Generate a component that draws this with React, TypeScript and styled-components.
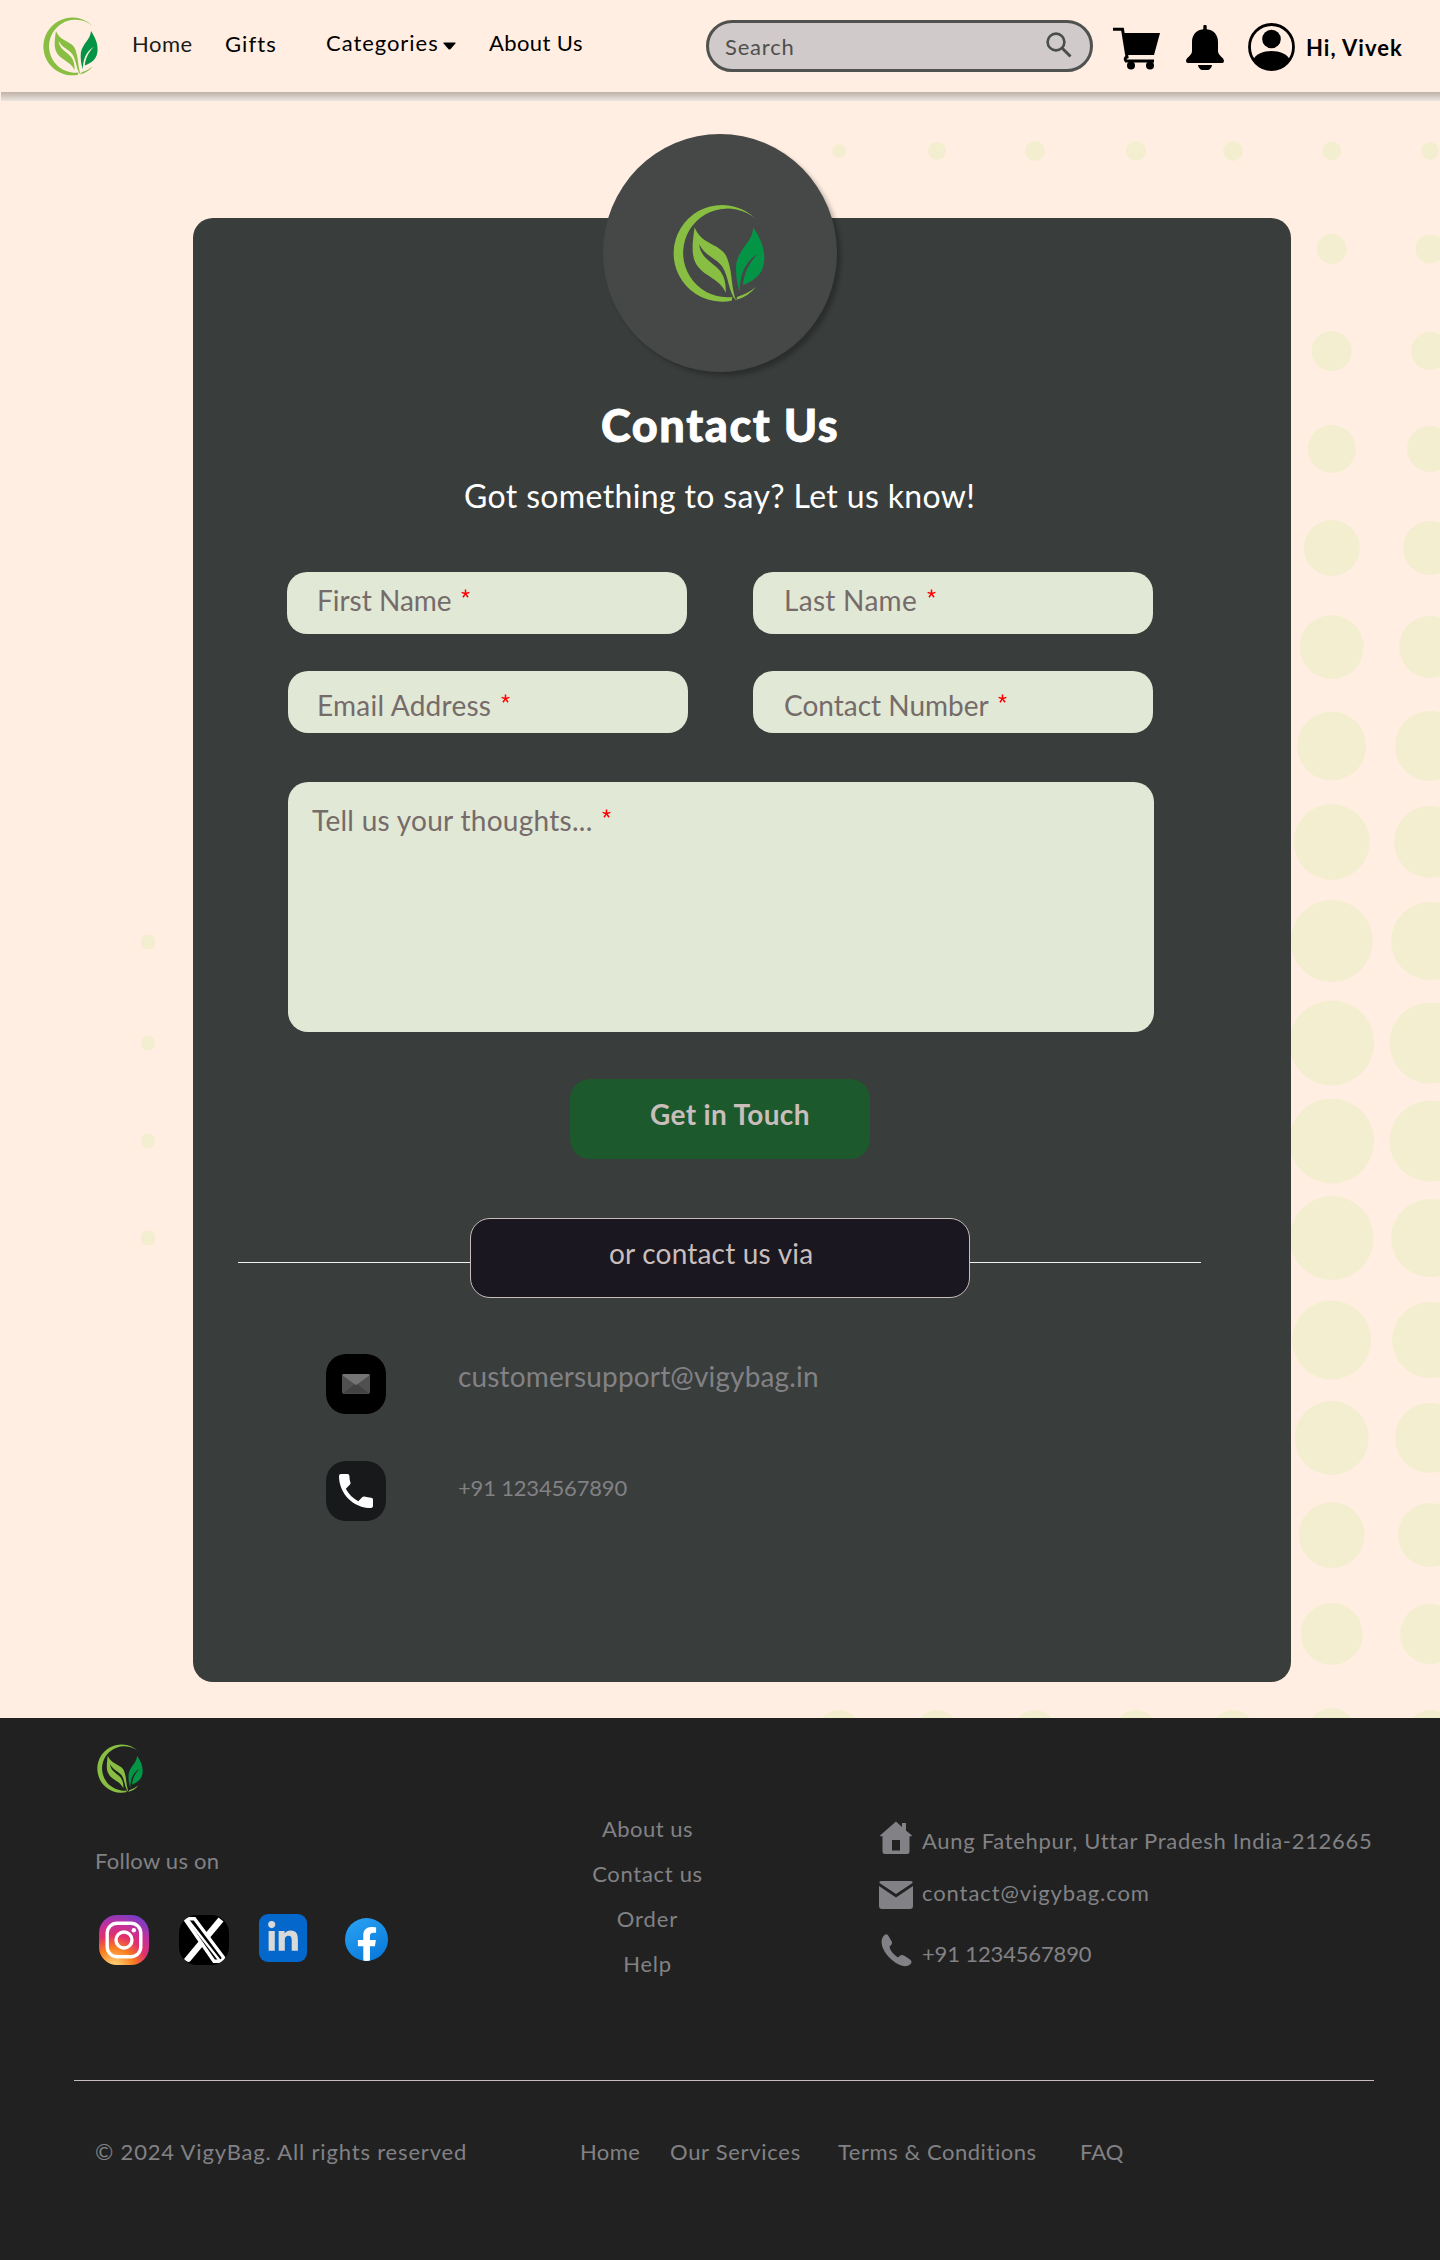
import React from "react";
import styled, { createGlobalStyle } from "styled-components";
import { FaFacebookF, FaLinkedinIn } from "react-icons/fa";

const Global = createGlobalStyle`
  * { box-sizing: border-box; }
  body { margin: 0; background: #ffeee1; font-family: Lato, "Liberation Sans", sans-serif; }
  svg { display: block; flex: none; }
`;

const Page = styled.div`width: 1440px; height: 2260px; display: flex; flex-direction: column; overflow: hidden;`;

const Label = styled.span<{ $size?: number; $ls?: number; $weight?: number; $color?: string; $w?: number; $x?: number; $top?: number }>`
  display: block;
  flex: none;
  white-space: nowrap;
  font-size: ${(p) => p.$size ?? 22}px;
  line-height: ${(p) => Math.round((p.$size ?? 22) * 1.2)}px;
  font-weight: ${(p) => p.$weight ?? 400};
  letter-spacing: ${(p) => p.$ls ?? 0}px;
  color: ${(p) => p.$color ?? "#000"};
  width: ${(p) => (p.$w ? `${p.$w}px` : "auto")};
  margin-left: ${(p) => p.$x ?? 0}px;
  margin-top: ${(p) => p.$top ?? 0}px;
`;

/* ---------- header ---------- */
const Header = styled.header`height: 92px; flex: none; display: flex; align-items: flex-start; padding-left: 43px;`;
const HeaderShadow = styled.div`height: 9px; flex: none; margin-left: 1px; background: linear-gradient(#bfb2a8, #eae4df);`;
const HeaderLogo = styled.div`width: 55px; margin-top: 17px;`;
const Caret = styled.svg`margin: 42px 0 0 4px;`;
const SearchBox = styled.div`
  width: 387px; height: 52px; margin: 20px 0 0 124px; flex: none;
  display: flex; align-items: flex-start; justify-content: space-between;
  padding: 9px 18px 0 16px; border: 3px solid #50524f; border-radius: 26px; background: #d0cbca;
`;
const HeaderIcon = styled.svg<{ $x: number; $top: number }>`margin: ${(p) => p.$top}px 0 0 ${(p) => p.$x}px;`;

/* ---------- main ---------- */
const Main = styled.main`position: relative; height: 1617px; flex: none; padding: 117px 0 0 193px; overflow: hidden;`;
const Dots = styled.svg`position: absolute; left: 0; top: 0;`;
const Card = styled.section`
  position: relative; width: 1098px; height: 1464px; border-radius: 20px; background: #393d3b;
  display: flex; flex-direction: column; align-items: flex-start;
`;
const Emblem = styled.div`
  width: 234px; height: 238px; margin: -84px 0 0 410px; flex: none; border-radius: 50%;
  background: #454847; box-shadow: 4px 4px 4px rgba(0, 0, 0, 0.25); padding: 70px 0 0 70px;
`;
const Title = styled.h1`
  margin: 26px 0 0 408px; font-size: 45px; line-height: 54px; font-weight: 900; letter-spacing: 1.6px;
  white-space: nowrap; color: #fff; -webkit-text-stroke: 0.8px #fff;
`;
const FieldRow = styled.div<{ $x: number; $gap: number; $top: number }>`
  display: flex; margin: ${(p) => p.$top}px 0 0 ${(p) => p.$x}px; gap: ${(p) => p.$gap}px;
`;
const Field = styled.div<{ $pt: number; $pl: number; $w?: number; $h?: number }>`
  width: ${(p) => p.$w ?? 400}px; height: ${(p) => p.$h ?? 62}px; flex: none;
  padding: ${(p) => p.$pt}px 0 0 ${(p) => p.$pl}px;
  display: flex; align-items: flex-start; border-radius: 20px; background: #e1e8d5;
`;
const Star = styled.svg`margin: 6px 0 0 9px;`;
const Submit = styled.button`
  width: 300px; height: 80px; margin: 47px 0 0 377px; padding: 18px 0 0 80px; flex: none;
  display: flex; align-items: flex-start; border: 0; border-radius: 20px; background: #1c592c; font-family: inherit;
`;
const Divider = styled.div`display: flex; align-items: flex-start; margin: 59px 0 0 45px;`;
const Rule = styled.div<{ $w: number }>`width: ${(p) => p.$w}px; height: 1px; margin-top: 44px; background: #f4f1f1;`;
const Pill = styled.div`
  width: 500px; height: 80px; padding: 17px 0 0 138px; border: 1px solid #c9bcbc; border-radius: 20px; background: #1a1720;
`;
const ContactRow = styled.div<{ $top: number }>`display: flex; align-items: flex-start; margin: ${(p) => p.$top}px 0 0 133px;`;
const Tile = styled.div<{ $bg: string }>`
  width: 60px; height: 60px; border-radius: 20px; background: ${(p) => p.$bg};
  display: flex; align-items: center; justify-content: center;
`;

/* ---------- footer ---------- */
const Footer = styled.footer`height: 542px; flex: none; background: #212121; display: flex; flex-direction: column;`;
const FooterTop = styled.div`display: flex; align-items: flex-start; height: 362px; flex: none; padding-left: 95px;`;
const Brand = styled.div`width: 480px; padding: 26px 0 0 0;`;
const FooterLogo = styled.div`margin-left: 2px;`;
const Socials = styled.div`display: flex; align-items: flex-start; margin: 40px 0 0 4px;`;
const Social = styled.div<{ $s: number; $x: number; $top: number; $r: number; $bg: string }>`
  width: ${(p) => p.$s}px; height: ${(p) => p.$s}px; margin: ${(p) => p.$top}px 0 0 ${(p) => p.$x}px;
  border-radius: ${(p) => p.$r}px; background: ${(p) => p.$bg}; color: #fff;
  display: flex; align-items: center; justify-content: center; overflow: hidden;
`;
const FacebookGlyph = styled(FaFacebookF)`margin: 9px 0 0 1px;`;
const Links = styled.nav`width: 145px; padding-top: 98px; display: flex; flex-direction: column; align-items: center; gap: 19px;`;
const Reach = styled.div`margin-left: 159px; padding-top: 103px; display: flex; flex-direction: column;`;
const ReachRow = styled.div<{ $h: number }>`display: flex; align-items: flex-start; height: ${(p) => p.$h}px;`;
const IconCell = styled.div`width: 43px; flex: none;`;
const FooterRule = styled.div`width: 1300px; height: 1px; margin-left: 74px; flex: none; background: #c9bcbc;`;
const FooterBottom = styled.div`display: flex; padding: 58px 0 0 95px;`;

const Logo = ({ w }: { w: number }) => (
  <svg width={w} height={(w * 294) / 276} viewBox="0 0 276 294">
    <g fill="#88be42">
      <path d="M249 45A145 145 0 1 0 176 290L178 279A133 133 0 1 1 249 45Z" />
      <path d="M190 287Q226 278 249 248Q226 268 193 278Z" />
      <path d="M65 70C56 125 58 150 64 168C80 216 138 218 158 266C160 235 152 207 130 189C100 165 80 150 79 121C95 156 130 162 148 188C168 218 165 262 190 291C178 262 177 225 172 197C168 178 164 162 156 150C132 118 84 120 65 70Z" />
    </g>
    <path fill="#039445" d="M241 70C238 115 200 130 190 178C187 210 192 240 200 263C200 215 215 172 255 149C225 180 212 212 210 244C252 226 274 205 274 160C274 125 258 98 241 70Z" />
  </svg>
);

const Required = () => (
  <Star width="9" height="9" viewBox="0 0 9 9">
    <path d="M4.5 .4V4.6M.6 3.4L4.5 4.6L8.4 3.4M2 8.2L4.5 4.6L7 8.2" stroke="#ff0000" strokeWidth="1.5" fill="none" />
  </Star>
);

const rows = [50, 148, 250, 348, 447, 546, 645, 741, 840, 942, 1040, 1137, 1239, 1337, 1434, 1533, 1631];
const radiiA = [9.5, 15, 20, 24, 28, 32, 34.5, 38, 41, 42.5, 42.5, 42, 39.5, 37, 33, 31, 24];
const radiiB = [9, 14.5, 19, 23, 27, 31, 35, 36, 39, 40.5, 40.5, 39, 38, 35, 32, 30, 22];
const topRow: [number, number][] = [[839, 7], [937, 9], [1035, 10], [1136, 10], [1233, 10]];
const footerLinks: [string, number][] = [["About us", 0.5], ["Contact us", 0.7], ["Order", 0.9], ["Help", 0.7]];

const grey = "#828185";
const ink = "#756b6a";

export default function App() {
  return (
    <Page>
      <Global />
      <Header>
        <HeaderLogo><Logo w={55} /></HeaderLogo>
        <Label $x={34} $w={93} $top={31} $ls={0.5} $color="#1c1c1a">Home</Label>
        <Label $w={101} $top={31} $ls={1.1}>Gifts</Label>
        <Label $w={113} $top={30} $ls={0.95}>Categories</Label>
        <Caret width="13" height="8" viewBox="0 0 13 8"><path d="M1 .5H12Q13 .5 12.4 1.6L7.4 7.2Q6.5 8 5.6 7.2L.6 1.6Q0 .5 1 .5Z" /></Caret>
        <Label $x={33} $w={93} $top={30} $ls={0.4}>About Us</Label>
        <SearchBox>
          <Label $color="#4f4f4d" $top={2} $ls={0.8}>Search</Label>
          <svg width="26" height="26" viewBox="0 0 26 26" fill="none" stroke="#4b4d4a" strokeWidth="2.6">
            <circle cx="10" cy="10" r="8.4" /><path d="M16 16L24.5 24.5" strokeWidth="3" />
          </svg>
        </SearchBox>
        <HeaderIcon $x={20} $top={27} width="47" height="43" viewBox="0 0 47 43">
          <path d="M11 6H47L41 28H14Z" /><path d="M0 2.2H9.5L14 30Q11 31 13 34H41" fill="none" stroke="#000" strokeWidth="3" />
          <circle cx="18" cy="38.5" r="4" /><circle cx="37" cy="38.5" r="4" />
        </HeaderIcon>
        <HeaderIcon $x={26} $top={25} width="38" height="45" viewBox="0 0 38 45">
          <path d="M17.3 1.5a1.7 1.7 0 0 1 3.4 0V4.2C28 5 32 10 32 17V26C32 31 38 32 38 36Q38 38 36 38H2Q0 38 0 36C0 32 6 31 6 26V17C6 10 10 5 17.3 4.2Z" />
          <path d="M12 40H26A7 5.5 0 0 1 12 40Z" />
        </HeaderIcon>
        <HeaderIcon $x={24} $top={23} width="47" height="48" viewBox="0 0 47 48">
          <ellipse cx="23.5" cy="24" rx="22" ry="22.5" fill="none" stroke="#000" strokeWidth="2.8" />
          <circle cx="23.5" cy="16" r="9.3" /><path d="M5 37C10 25 37 25 42 37C33 50 14 50 5 37Z" />
        </HeaderIcon>
        <Label $x={11} $top={35} $weight={700} $ls={1}>Hi, Vivek</Label>
      </Header>
      <HeaderShadow />

      <Main>
        <Dots width="1440" height="1617" viewBox="0 0 1440 1617" fill="#f4eed1">
          {rows.map((y, i) => <circle key={`a${y}`} cx="1331.7" cy={y} r={radiiA[i]} />)}
          {rows.map((y, i) => <circle key={`b${y}`} cx="1430" cy={y} r={radiiB[i]} />)}
          {topRow.map(([x, r]) => <circle key={`t${x}`} cx={x} cy="50" r={r} />)}
          {topRow.map(([x]) => <circle key={`u${x}`} cx={x} cy="1631" r="22" />)}
          {[841, 942, 1040, 1137].map((y) => <circle key={`l${y}`} cx="148" cy={y} r="7.5" />)}
        </Dots>
        <Card>
          <Emblem><Logo w={92} /></Emblem>
          <Title>Contact Us</Title>
          <Label $size={32} $ls={0.36} $color="#fff" $top={25} $x={271}>Got something to say? Let us know!</Label>
          <FieldRow $x={94} $gap={66} $top={57}>
            <Field $pt={11} $pl={30}><Label $size={28} $color={ink} $w={135}>First Name</Label><Required /></Field>
            <Field $pt={11} $pl={31}><Label $size={28} $ls={0.3} $color={ink} $w={134}>Last Name</Label><Required /></Field>
          </FieldRow>
          <FieldRow $x={95} $gap={65} $top={37}>
            <Field $pt={17} $pl={29}><Label $size={28} $ls={0.25} $color={ink} $w={175}>Email Address</Label><Required /></Field>
            <Field $pt={17} $pl={31}><Label $size={28} $color={ink} $w={205}>Contact Number</Label><Required /></Field>
          </FieldRow>
          <FieldRow $x={95} $gap={0} $top={49}>
            <Field $pt={21} $pl={24} $w={866} $h={250}><Label $size={28} $ls={0.28} $color={ink} $w={281}>Tell us your thoughts...</Label><Required /></Field>
          </FieldRow>
          <Submit><Label $size={28} $weight={700} $ls={0.35} $color="#c9bebc">Get in Touch</Label></Submit>
          <Divider>
            <Rule $w={232} />
            <Pill><Label $size={28} $ls={0.2} $color="#c9bebc">or contact us via</Label></Pill>
            <Rule $w={231} />
          </Divider>
          <ContactRow $top={56}>
            <Tile $bg="#000">
              <svg width="28" height="20" viewBox="0 0 28 20">
                <rect width="28" height="20" rx="2" fill="#505050" /><path d="M1 19.5L14 9L27 19.5Z" fill="#424242" /><path d="M0 1Q1 0 2 0H26Q27 0 28 1L15 10.5Q14 11 13 10.5Z" fill="#747474" />
              </svg>
            </Tile>
            <Label $size={28} $ls={0.15} $color={grey} $top={5} $x={72}>customersupport@vigybag.in</Label>
          </ContactRow>
          <ContactRow $top={47}>
            <Tile $bg="#18191b">
              <svg width="34" height="34" viewBox="3 3 18 18" fill="#fff">
                <path d="M6.62 10.79c1.44 2.83 3.76 5.14 6.59 6.59l2.2-2.2c.27-.27.67-.36 1.02-.24 1.12.37 2.33.57 3.57.57.55 0 1 .45 1 1V20c0 .55-.45 1-1 1-9.39 0-17-7.61-17-17 0-.55.45-1 1-1h3.5c.55 0 1 .45 1 1 0 1.25.2 2.45.57 3.57.11.35.03.74-.25 1.02l-2.2 2.2z" />
              </svg>
            </Tile>
            <Label $ls={-0.18} $color={grey} $top={14} $x={72}>+91 1234567890</Label>
          </ContactRow>
        </Card>
      </Main>

      <Footer>
        <FooterTop>
          <Brand>
            <FooterLogo><Logo w={46} /></FooterLogo>
            <Label $ls={0.25} $color={grey} $top={55}>Follow us on</Label>
            <Socials>
              <Social $s={50} $x={0} $top={1} $r={18} $bg="radial-gradient(circle at 30% 107%, #ffdd7a 0%, #fdc468 10%, #fa7e1e 32%, #e1306c 52%, #c62f9a 68%, #7b3cc4 88%, #4c68d7 100%)">
                <svg width="38" height="38" viewBox="0 0 38 38" fill="none" stroke="#fff" strokeWidth="3.4">
                  <rect x="2.2" y="2.2" width="33.6" height="33.6" rx="10" /><circle cx="19" cy="19" r="8" /><circle cx="28.8" cy="9.3" r="2.2" fill="#fff" stroke="none" />
                </svg>
              </Social>
              <Social $s={50} $x={30} $top={1} $r={18} $bg="#000">
                <svg width="50" height="50" viewBox="0 0 50 50">
                  <path d="M39.5 2.5L44.5 6.5L11 46.5Q8 48 5 44Z" fill="#fff" />
                  <path d="M6.5 5Q8 3.800 10 3.800H15.500L44.500 42.500Q43.500 46.300 41 46.300H35Z" fill="#000" stroke="#fff" strokeWidth="3.400" />
                  <path d="M9 5L41 46" stroke="#fff" strokeWidth="2.400" />
                </svg>
              </Social>
              <Social $s={48} $x={30} $top={0} $r={9} $bg="#0467cb"><FaLinkedinIn size={34} color="#d9d9d9" /></Social>
              <Social $s={43} $x={38} $top={4} $r={22} $bg="linear-gradient(150deg, #2aa4f4, #0675d8)"><FacebookGlyph size={34} /></Social>
            </Socials>
          </Brand>
          <Links>
            {footerLinks.map(([t, ls]) => <Label key={t} $ls={ls} $color={grey}>{t}</Label>)}
          </Links>
          <Reach>
            <ReachRow $h={60}>
              <IconCell><svg width="34" height="33" viewBox="0 0 34 33" fill={grey}><path fillRule="evenodd" d="M17 .5L23 6V2H27V9.5L33 14.5Q32 16 30.5 15V30.5Q30.500 33 28 33H6Q3.500 33 3.500 30.500V15Q2 16 1 14.500ZM13 19V29.500H21V19Z" /></svg></IconCell>
              <Label $ls={0.68} $color={grey} $top={7}>Aung Fatehpur, Uttar Pradesh India-212665</Label>
            </ReachRow>
            <ReachRow $h={53}>
              <IconCell><svg width="34" height="28" viewBox="0 0 34 28" fill={grey}><path d="M2 0H32Q34 0 33.500 2L17 13L.5 2Q0 0 2 0Z" /><path d="M0 5L17 16.500L34 5V25Q34 28 31 28H3Q0 28 0 25Z" /></svg></IconCell>
              <Label $ls={0.9} $color={grey} $top={-1}>contact@vigybag.com</Label>
            </ReachRow>
            <ReachRow $h={40}>
              <IconCell><svg width="34" height="33" viewBox="0 0 34 33" fill={grey}><path d="M5 1.500Q8-1 9.500 2L13 8Q13.500 10.500 10.500 12.500Q11 18 19 23.500Q22 20 25 21.500L31 25.500Q34 28 31 30.500C27 34 20 32 13 26C5 19-1 8 5 1.500Z" /></svg></IconCell>
              <Label $ls={-0.15} $color={grey} $top={7}>+91 1234567890</Label>
            </ReachRow>
          </Reach>
        </FooterTop>
        <FooterRule />
        <FooterBottom>
          <Label $ls={0.83} $color={grey} $w={485}>© 2024 VigyBag. All rights reserved</Label>
          <Label $ls={0.4} $color={grey} $w={90}>Home</Label>
          <Label $ls={0.7} $color={grey} $w={168}>Our Services</Label>
          <Label $ls={0.55} $color={grey} $w={242}>Terms &amp; Conditions</Label>
          <Label $ls={0.1} $color={grey}>FAQ</Label>
        </FooterBottom>
      </Footer>
    </Page>
  );
}
